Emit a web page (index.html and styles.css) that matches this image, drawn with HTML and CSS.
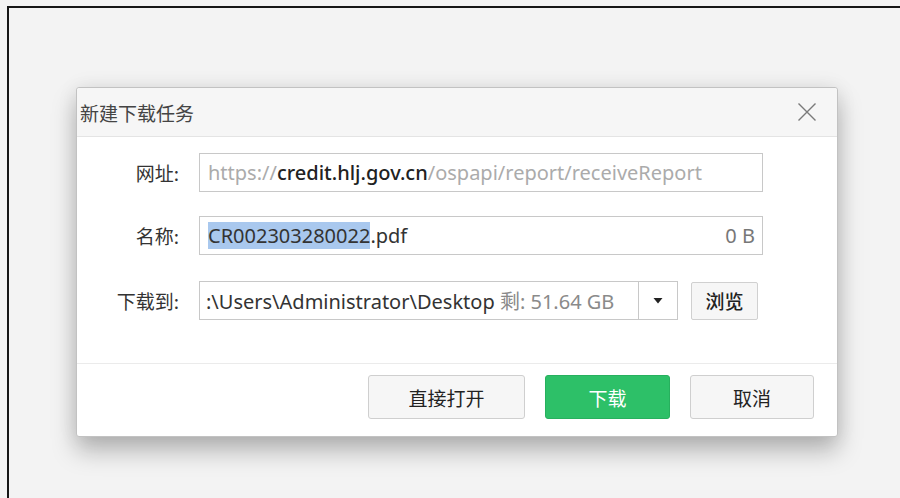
FILE: index.html
```html
<!DOCTYPE html>
<html lang="zh-CN">
<head>
<meta charset="utf-8">
<title>新建下载任务</title>
<link rel="stylesheet" href="styles.css">
</head>
<body>
<div class="frame">
  <div class="dialog">
    <div class="dialog-head">
      <span class="dialog-title">新建下载任务</span>
      <svg class="close" width="20" height="20" viewBox="0 0 20 20">
        <path d="M1.5 1.5 L18.5 18.5 M18.5 1.5 L1.5 18.5" stroke="#7a7a7a" stroke-width="1.4" fill="none"/>
      </svg>
    </div>
    <div class="dialog-body">
      <div class="row">
        <label class="label">网址:</label>
        <div class="field url"><span class="dim">https://</span><span class="host">credit.hlj.gov.cn</span><span class="dim">/ospapi/report/receiveReport</span></div>
      </div>
      <div class="row">
        <label class="label">名称:</label>
        <div class="field name"><span class="sel">CR002303280022</span>.pdf<span class="size">0 B</span></div>
      </div>
      <div class="row row-path">
        <label class="label">下载到:</label>
        <div class="field path">
          <span class="path-text">:\Users\Administrator\Desktop <span class="free">剩: 51.64 GB</span></span>
          <span class="drop"><svg width="10" height="6" viewBox="0 0 10 6"><path d="M0.5 0 H9.5 L5 5.5 Z" fill="#222"/></svg></span>
        </div>
        <button class="btn-small">浏览</button>
      </div>
    </div>
    <div class="dialog-foot">
      <button class="btn btn-open">直接打开</button>
      <button class="btn btn-primary">下载</button>
      <button class="btn btn-cancel">取消</button>
    </div>
  </div>
</div>
</body>
</html>
```

FILE: styles.css
```css
html, body {
  margin: 0;
  padding: 0;
}

body {
  background: #f3f3f3;
  width: 900px;
  height: 498px;
  overflow: hidden;
  font-family: "Noto Sans", "Noto Sans CJK SC", sans-serif;
  color: #333;
}

.frame {
  margin: 6px 0 0 7px;
  border-top: 2px solid #161616;
  border-left: 2px solid #161616;
  height: 492px;
  padding: 79px 0 0 67px;
  box-sizing: border-box;
}

.dialog {
  width: 762px;
  height: 350px;
  box-sizing: border-box;
  background: #fff;
  border: 1px solid #c2c2c2;
  border-radius: 3px;
  box-shadow: 0 14px 24px rgba(0, 0, 0, 0.26), 0 0 20px rgba(0, 0, 0, 0.08);
  display: flex;
  flex-direction: column;
}

.dialog-head {
  height: 49px;
  background: #f6f6f6;
  border-bottom: 1px solid #e4e4e4;
  border-radius: 3px 3px 0 0;
  display: flex;
  align-items: center;
  justify-content: space-between;
  padding: 0 20px 0 3px;
  box-sizing: border-box;
}

.dialog-title {
  font-size: 19px;
  color: #444;
  font-family: "Noto Sans CJK SC", sans-serif;
}

.close {
  display: block;
}

.dialog-body {
  flex: 1;
  padding-top: 16px;
  display: flex;
  flex-direction: column;
  gap: 24px;
}

.row {
  display: flex;
  align-items: center;
  height: 39px;
}

.row-path {
  margin-top: 2px;
}

.label {
  width: 102px;
  text-align: right;
  font-size: 19px;
  color: #333;
  font-family: "Noto Sans CJK SC", sans-serif;
  margin-right: 20px;
  flex: none;
}

.field {
  height: 39px;
  box-sizing: border-box;
  border: 1px solid #c8c8c8;
  background: #fff;
  display: flex;
  align-items: center;
  padding-left: 8px;
  font-size: 20px;
  white-space: nowrap;
  overflow: hidden;
}

.url, .name {
  width: 564px;
}

.dim {
  color: #ababab;
}

.host {
  color: #222;
  font-weight: 500;
}

.name {
  color: #333;
}

.sel {
  background: #a9c8ee;
  line-height: 27px;
}

.size {
  margin-left: auto;
  padding-right: 7px;
  color: #777;
}

.path {
  width: 479px;
  padding-left: 6px;
  padding-right: 0;
  color: #333;
}

.path-text {
  flex: 1;
  overflow: hidden;
}

.free {
  color: #8a8a8a;
}

.drop {
  width: 38px;
  height: 100%;
  border-left: 1px solid #c8c8c8;
  display: flex;
  align-items: center;
  justify-content: center;
  flex: none;
}

.drop svg {
  display: block;
}

.btn-small {
  margin-left: 13px;
  width: 67px;
  height: 38px;
  box-sizing: border-box;
  border: 1px solid #d0d0d0;
  border-radius: 2px;
  background: #f6f6f6;
  font-family: "Noto Sans CJK SC", sans-serif;
  font-size: 19px;
  font-weight: 500;
  color: #222;
  padding: 0;
}

.dialog-foot {
  height: 73px;
  border-top: 1px solid #ebebeb;
  box-sizing: border-box;
  display: flex;
  justify-content: flex-end;
  align-items: flex-start;
  padding: 11px 23px 0 0;
  gap: 20px;
}

.btn {
  height: 44px;
  box-sizing: border-box;
  border: 1px solid #cfcfcf;
  border-radius: 3px;
  background: #f6f6f6;
  font-family: "Noto Sans CJK SC", sans-serif;
  font-size: 19px;
  color: #222;
  padding: 0;
}

.btn-open {
  width: 157px;
}

.btn-primary {
  width: 125px;
  background: #2dc068;
  border-color: #27b05e;
  color: #fff;
}

.btn-cancel {
  width: 124px;
}
```
